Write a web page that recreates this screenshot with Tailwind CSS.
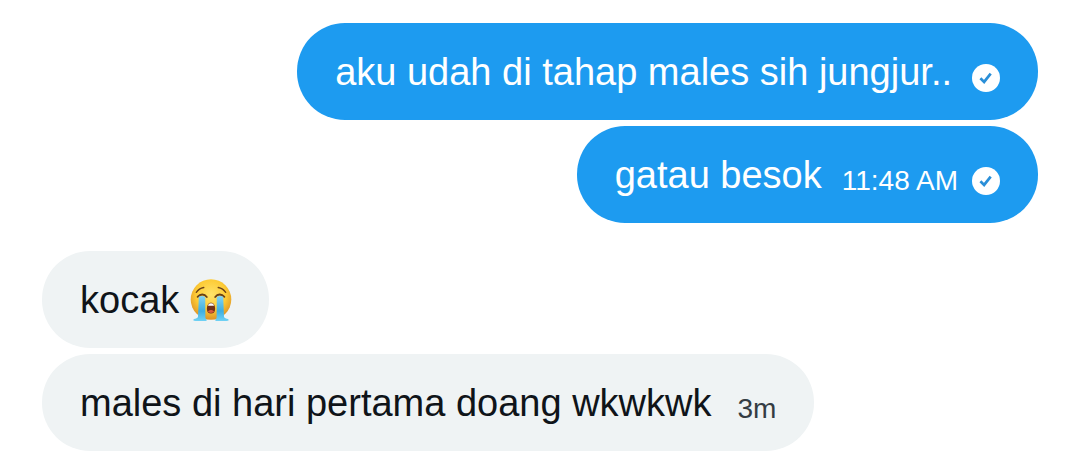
<!DOCTYPE html>
<html lang="id">
<head>
<meta charset="utf-8">
<meta name="viewport" content="width=device-width, initial-scale=1">
<title>Chat</title>
<script src="https://cdn.jsdelivr.net/npm/@tailwindcss/browser@4"></script>
</head>
<body class="bg-white font-['Liberation_Sans',Arial,sans-serif] text-[38px] leading-[52px] text-[#0f1419]">
<svg class="hidden" aria-hidden="true">
  <symbol id="sent" viewBox="0 0 28 28">
    <circle cx="14" cy="14" r="14" fill="#fff"/>
    <path d="M8.4 14.3l3.7 3.6 6.6-8.2" fill="none" stroke="#2a8fd8" stroke-width="2.7"/>
  </symbol>
</svg>
<main class="flex flex-col gap-7 px-[42px] pt-[23px] pb-4">
  <section class="flex flex-col items-end gap-1.5">
    <div class="flex items-end rounded-[48px] bg-[#1d9bf0] px-[38px] pt-[23px] pb-[22px] text-white">
      <p>aku udah di tahap males sih jungjur..</p>
      <svg class="mb-1.5 ml-5 size-7 shrink-0" role="img" aria-label="Terkirim"><use href="#sent"/></svg>
    </div>
    <div class="flex items-end rounded-[48px] bg-[#1d9bf0] px-[38px] pt-[23px] pb-[22px] text-white">
      <p>gatau besok</p>
      <time class="mb-0.5 ml-5 text-[28px] leading-[36px]">11:48 AM</time>
      <svg class="mb-1.5 ml-3.5 size-7 shrink-0" role="img" aria-label="Terkirim"><use href="#sent"/></svg>
    </div>
  </section>
  <section class="flex flex-col items-start gap-1.5">
    <div class="flex items-center gap-2.5 rounded-[48px] bg-[#eff3f4] pl-[38px] pr-9 pt-[23px] pb-[22px]">
      <p>kocak</p>
      <svg class="size-[44px] shrink-0" viewBox="0 0 44 44" role="img" aria-label="😭">
        <defs>
          <radialGradient id="face" cx=".5" cy=".38" r=".62">
            <stop offset="0" stop-color="#ffe36a"/><stop offset=".6" stop-color="#fdcb35"/><stop offset="1" stop-color="#dc9126"/>
          </radialGradient>
          <linearGradient id="tear" x1="0" y1="0" x2="0" y2="1">
            <stop offset="0" stop-color="#83d4f4"/><stop offset=".6" stop-color="#3eaee0"/><stop offset="1" stop-color="#70d2f5"/>
          </linearGradient>
        </defs>
        <circle cx="22" cy="21.5" r="20.3" fill="url(#face)"/>
        <g fill="none" stroke="#694018" stroke-linecap="round">
          <path d="M7.3 14.4C9 11.8 12 10 14.8 9.5M36.7 14.400C35 11.800 32 10 29.200 9.500" stroke-width="1.3"/>
          <path d="M8.6 18.8c2.800-3.200 6.800-3 9.200.2M35.400 18.800c-2.800-3.200-6.800-3-9.200.2" stroke-width="1.8"/>
        </g>
        <path id="stream" d="M9.800 18.800q3.400-1.800 6.400.2l.2 20.200c0 1.200.6 1.700 1.300 2.400.5 1.100-.5 1.500-1.800 1.500H6.500c-2.200 0-2.800-1-1.500-2 1.900-.5 3.500-.8 4-2.400z" fill="url(#tear)"/>
        <use href="#stream" transform="translate(44 0) scale(-1 1)"/>
        <path d="M22 24.800c-2.700 0-4.100 2.700-4.100 6.200 0 3.100 1.500 4.500 4.100 4.500s4.100-1.400 4.100-4.500c0-3.500-1.400-6.200-4.100-6.200z" fill="#713119"/>
        <path d="M19 27.700c.4-1.700 1.500-2.400 3-2.400s2.600.7 3 2.400z" fill="#fff"/>
        <path d="M18.900 33.600c1-2.300 5.200-2.300 6.200 0-1.300 1.700-4.900 1.700-6.200 0z" fill="#d9583c"/>
      </svg>
    </div>
    <div class="flex items-end rounded-[48px] bg-[#eff3f4] px-[38px] pt-[23px] pb-[22px]">
      <p>males di hari pertama doang wkwkwk</p>
      <time class="mb-0.5 ml-[26px] text-[28px] leading-[36px] text-[#343c43]">3m</time>
    </div>
  </section>
</main>
</body>
</html>
